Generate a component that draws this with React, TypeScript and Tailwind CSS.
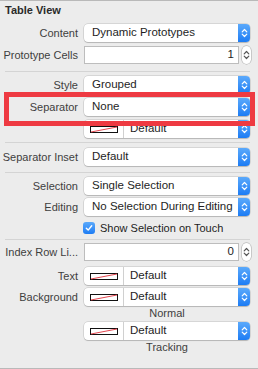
import React from "react";

const Chevrons = ({ color = "white" }: { color?: string }) => (
  <svg width="7" height="10" viewBox="0 0 7 10" fill="none">
    <path d="M1.2 3.8 L3.5 1.5 L5.8 3.8" stroke={color} strokeWidth="1.2" strokeLinecap="round" strokeLinejoin="round" />
    <path d="M1.2 6.2 L3.5 8.5 L5.8 6.2" stroke={color} strokeWidth="1.2" strokeLinecap="round" strokeLinejoin="round" />
  </svg>
);

const Popup = ({ children }: { children: React.ReactNode }) => (
  <div className="flex h-[18px] w-[166px] rounded-[4px] bg-white shadow-[0_0_0_0.5px_rgba(0,0,0,0.18),0_1px_1px_rgba(0,0,0,0.15)]">
    <div className="flex min-w-0 flex-1 items-center overflow-hidden whitespace-nowrap pl-[8px] text-[11.5px] text-[#1e1e1e]">
      {children}
    </div>
    <div className="flex w-[12px] items-center justify-center rounded-r-[4px] bg-gradient-to-b from-[#5aa9fb] to-[#1b7cf4]">
      <Chevrons />
    </div>
  </div>
);

const ColorPopup = () => (
  <div className="flex h-[18px] w-[166px] rounded-[4px] bg-white shadow-[0_0_0_0.5px_rgba(0,0,0,0.18),0_1px_1px_rgba(0,0,0,0.15)]">
    <div className="flex w-[40px] items-center justify-center border-r border-[#d0d0d0]">
      <svg width="28" height="7" viewBox="0 0 28 7">
        <rect x="0.5" y="0.5" width="27" height="6" fill="white" stroke="#111" strokeWidth="1" />
        <line x1="1" y1="6" x2="27" y2="1" stroke="#e0303a" strokeWidth="0.9" />
      </svg>
    </div>
    <div className="flex flex-1 items-center pl-[6px] text-[11.5px] text-[#1e1e1e]">Default</div>
    <div className="flex w-[12px] items-center justify-center rounded-r-[4px] bg-gradient-to-b from-[#5aa9fb] to-[#1b7cf4]">
      <Chevrons />
    </div>
  </div>
);

const Stepper = () => (
  <div className="ml-[3px] flex h-[18px] w-[9px] items-center justify-center rounded-full bg-white shadow-[0_0_0_0.5px_rgba(0,0,0,0.3)]">
    <Chevrons color="#555" />
  </div>
);

const Field = ({ value }: { value: string }) => (
  <div className="flex items-center">
    <div className="flex h-[18px] w-[155px] items-center justify-end border border-[#bdbdbd] bg-white pr-[4px] text-[11.5px] text-[#1e1e1e]">
      {value}
    </div>
    <Stepper />
  </div>
);

const Row = ({ label, children, className = "" }: { label?: string; children: React.ReactNode; className?: string }) => (
  <div className={`flex items-center ${className}`}>
    <div className="w-[79px] whitespace-nowrap pr-[1px] text-right text-[11px] text-[#3e3e3e]">{label}</div>
    <div className="ml-[5px]">{children}</div>
  </div>
);

const Divider = ({ className = "" }: { className?: string }) => (
  <div className={`mx-[5px] h-px w-[245px] bg-[#d4d4d4] ${className}`} />
);

export default function App() {
  return (
    <div
      className="relative h-[369px] w-[258px] overflow-hidden border-t border-b border-[#b9b9b9] bg-[#ececec]"
      style={{ fontFamily: '"Liberation Sans", Arial, sans-serif' }}
    >
      <div className="flex h-[19px] items-center pl-[5px] text-[11px] font-bold text-[#2a2a2a]">Table View</div>
      <Row label="Content" className="mt-[4px]">
        <Popup>Dynamic Prototypes</Popup>
      </Row>
      <Row label="Prototype Cells" className="mt-[4px]">
        <Field value="1" />
      </Row>
      <Divider className="mt-[7px]" />
      <Row label="Style" className="mt-[4px]">
        <Popup>Grouped</Popup>
      </Row>
      <Row label="Separator" className="mt-[4px]">
        <Popup>None</Popup>
      </Row>
      <Row className="mt-[4px]">
        <ColorPopup />
      </Row>
      <Divider className="mt-[4px]" />
      <Row label="Separator Inset" className="mt-[5px]">
        <Popup>Default</Popup>
      </Row>
      <Divider className="mt-[6px]" />
      <Row label="Selection" className="mt-[4px]">
        <Popup>Single Selection</Popup>
      </Row>
      <Row label="Editing" className="mt-[3px]">
        <Popup>No Selection During Editing</Popup>
      </Row>
      <div className="ml-[83px] mt-[6px] flex h-[12px] items-center">
        <div className="flex h-[12px] w-[12px] items-center justify-center rounded-[3px] bg-gradient-to-b from-[#5aa9fb] to-[#1b7cf4]">
          <svg width="8" height="8" viewBox="0 0 8 8" fill="none">
            <path d="M1.3 4.2 L3.2 6.1 L6.7 1.8" stroke="white" strokeWidth="1.4" strokeLinecap="round" strokeLinejoin="round" />
          </svg>
        </div>
        <span className="ml-[5px] text-[11px] leading-[12px] text-[#1e1e1e]">Show Selection on Touch</span>
      </div>
      <Divider className="mt-[5px]" />
      <Row label="Index Row Li..." className="mt-[3px]">
        <Field value="0" />
      </Row>
      <Row label="Text" className="mt-[6px]">
        <ColorPopup />
      </Row>
      <Row label="Background" className="mt-[3px]">
        <ColorPopup />
      </Row>
      <div className="ml-[84px] w-[166px] text-center text-[11px] leading-[14px] text-[#3e3e3e]">Normal</div>
      <Row className="mt-[2px]">
        <ColorPopup />
      </Row>
      <div className="ml-[84px] w-[166px] text-center text-[11px] leading-[14px] text-[#3e3e3e]">Tracking</div>

      <div className="pointer-events-none absolute left-[4px] top-[91px] h-[34px] w-[251px] border-[5px] border-[#ee3a42]" />
    </div>
  );
}
